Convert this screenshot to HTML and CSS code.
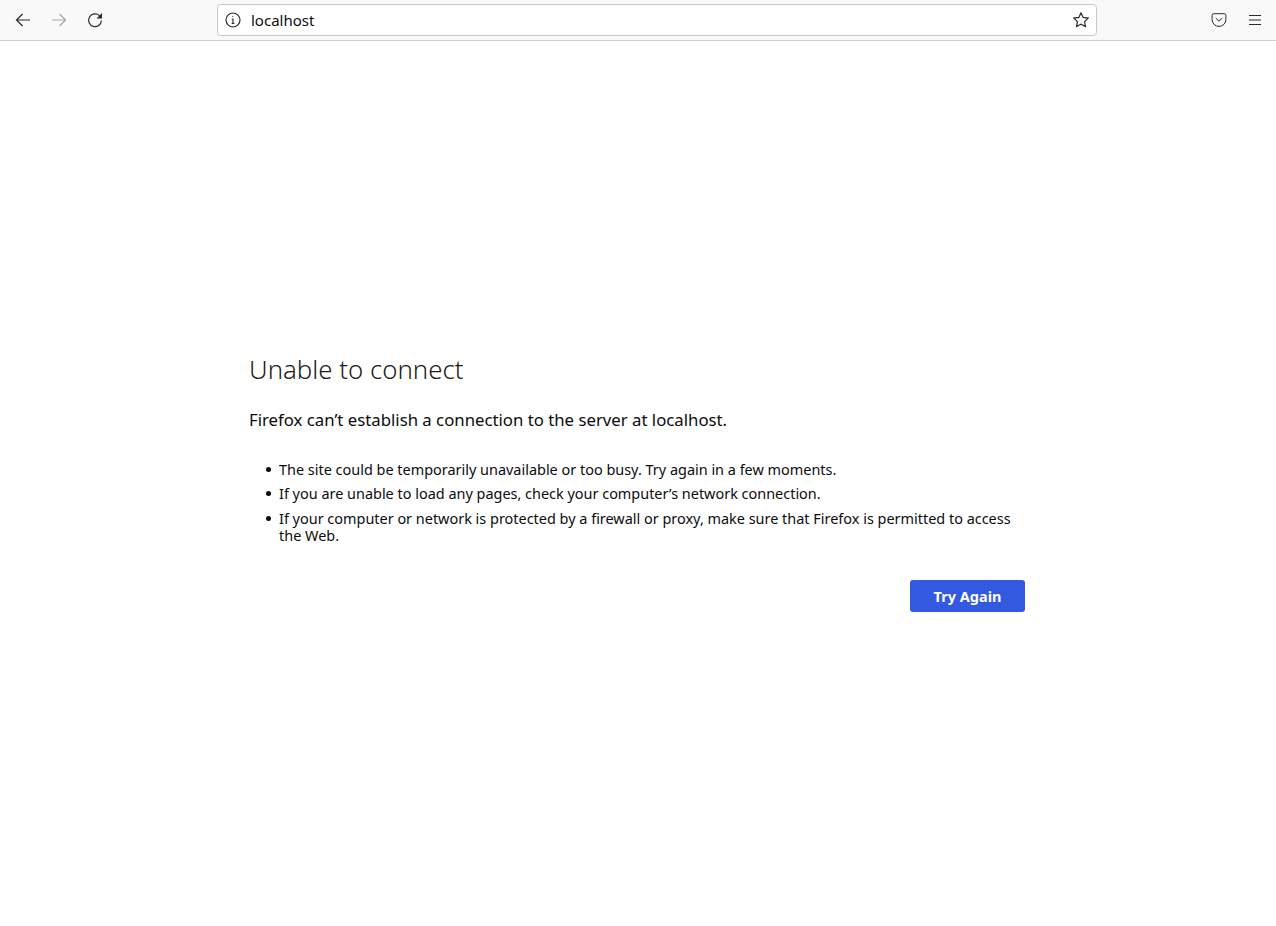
FILE: index.html
```html
<!DOCTYPE html>
<html lang="en">
<head>
    <meta charset="UTF-8">
    <title>Problem loading page</title>
    <link rel="stylesheet" href="styles.css">
</head>
<body>
    <header class="toolbar">
        <div class="nav-buttons">
            <button class="tool-btn">
                <svg viewBox="0 0 16 16" class="icon"><path d="M15 8H1.800M7.500 2 1.500 8l6 6"/></svg>
            </button>
            <button class="tool-btn disabled">
                <svg viewBox="0 0 16 16" class="icon"><path d="M1 8h13.200M8.500 2l6 6-6 6"/></svg>
            </button>
            <button class="tool-btn">
                <svg viewBox="0 0 16 16" class="icon"><path d="M14.400 8.500A6.400 6.400 0 1 1 12.200 3.400L14.400 5.600"/><path d="M15 1v5.500H9.500" class="filled"/></svg>
            </button>
        </div>
        <div class="urlbar">
            <svg viewBox="0 0 16 16" class="icon info"><circle cx="8" cy="8" r="7"/><path d="M8 7v4.500M6.600 11.500h2.800M6.800 7H8"/><circle cx="7.800" cy="4.600" r=".6" class="filled"/></svg>
            <span class="url-text">localhost</span>
            <svg viewBox="0 0 16 16" class="icon star"><path d="M8 .9l2.200 4.500 4.900.7-3.500 3.500.8 4.900L8 12.200l-4.400 2.300.8-4.900L.9 6.100l4.900-.7z"/></svg>
        </div>
        <div class="right-buttons">
            <button class="tool-btn">
                <svg viewBox="0 0 16 16" class="icon thin"><path d="M2.800 1.700h10.400a1.700 1.700 0 0 1 1.700 1.700v4.100a6.900 6.900 0 0 1-13.800 0V3.400a1.700 1.700 0 0 1 1.700-1.700z"/><path d="M4.800 6.200 8 9.200l3.200-3"/></svg>
            </button>
            <button class="tool-btn">
                <svg viewBox="0 0 16 16" class="icon thin"><path d="M2 3.500h12M2 8h12M2 12.500h12"/></svg>
            </button>
        </div>
    </header>

    <main class="error-page">
        <h1>Unable to connect</h1>
        <p class="short-desc">Firefox can’t establish a connection to the server at localhost.</p>
        <ul class="reasons">
            <li>The site could be temporarily unavailable or too busy. Try again in a few moments.</li>
            <li>If you are unable to load any pages, check your computer’s network connection.</li>
            <li>If your computer or network is protected by a firewall or proxy, make sure that Firefox is permitted to access the Web.</li>
        </ul>
        <div class="actions">
            <button class="try-again">Try Again</button>
        </div>
    </main>
</body>
</html>
```

FILE: styles.css
```css
body {
    margin: 0;
    background: #fff;
    color: #0c0c0d;
    font-family: "Noto Sans", sans-serif;
}

/* Browser toolbar */
.toolbar {
    display: flex;
    align-items: center;
    height: 40px;
    background: #f9f9fa;
    border-bottom: 1px solid #cfcfd1;
}

.nav-buttons {
    display: flex;
    width: 217px;
    padding-left: 5px;
    box-sizing: border-box;
}

.right-buttons {
    display: flex;
    margin-left: 104px;
}

.tool-btn {
    display: flex;
    align-items: center;
    justify-content: center;
    width: 36px;
    height: 32px;
    padding: 0;
    border: none;
    background: none;
}

.icon {
    width: 16px;
    height: 16px;
    fill: none;
    stroke: #2b2b2f;
    stroke-width: 1.2;
}

.icon.thin {
    stroke-width: 1;
}

.icon .filled {
    fill: #2b2b2f;
    stroke: none;
}

.disabled .icon {
    opacity: 0.4;
}

.urlbar {
    display: flex;
    align-items: center;
    width: 880px;
    height: 32px;
    box-sizing: border-box;
    padding: 0 7px;
    background: #fff;
    border: 1px solid #c8c8ca;
    border-radius: 4px;
}

.url-text {
    flex: 1;
    margin-left: 10px;
    font-size: 15px;
    color: #0c0c0d;
}

/* Error content */
.error-page {
    width: 776px;
    margin: 310px 0 0 249px;
}

h1 {
    margin: 0;
    font-size: 25.800px;
    font-weight: 300;
    line-height: 36px;
    color: #1c1c20;
}

.short-desc {
    margin: 21px 0 0;
    font-size: 16.750px;
    line-height: 24px;
}

.reasons {
    margin: 29px 0 0;
    padding: 0 0 0 30px;
    list-style: none;
    font-size: 14.450px;
    line-height: 17px;
}

.reasons li {
    position: relative;
    margin-bottom: 7px;
}

.reasons li:nth-child(2) {
    margin-bottom: 8px;
}

.reasons li::before {
    content: "";
    position: absolute;
    left: -13.500px;
    top: 6px;
    width: 5px;
    height: 5px;
    border-radius: 50%;
    background: #0c0c0d;
}

.actions {
    display: flex;
    justify-content: flex-end;
    margin-top: 36px;
}

.try-again {
    width: 115px;
    height: 32px;
    padding: 0;
    border: none;
    border-radius: 3px;
    background: #3259e0;
    color: #fff;
    font-family: "Noto Sans", sans-serif;
    font-size: 14.500px;
    font-weight: 700;
}
```
